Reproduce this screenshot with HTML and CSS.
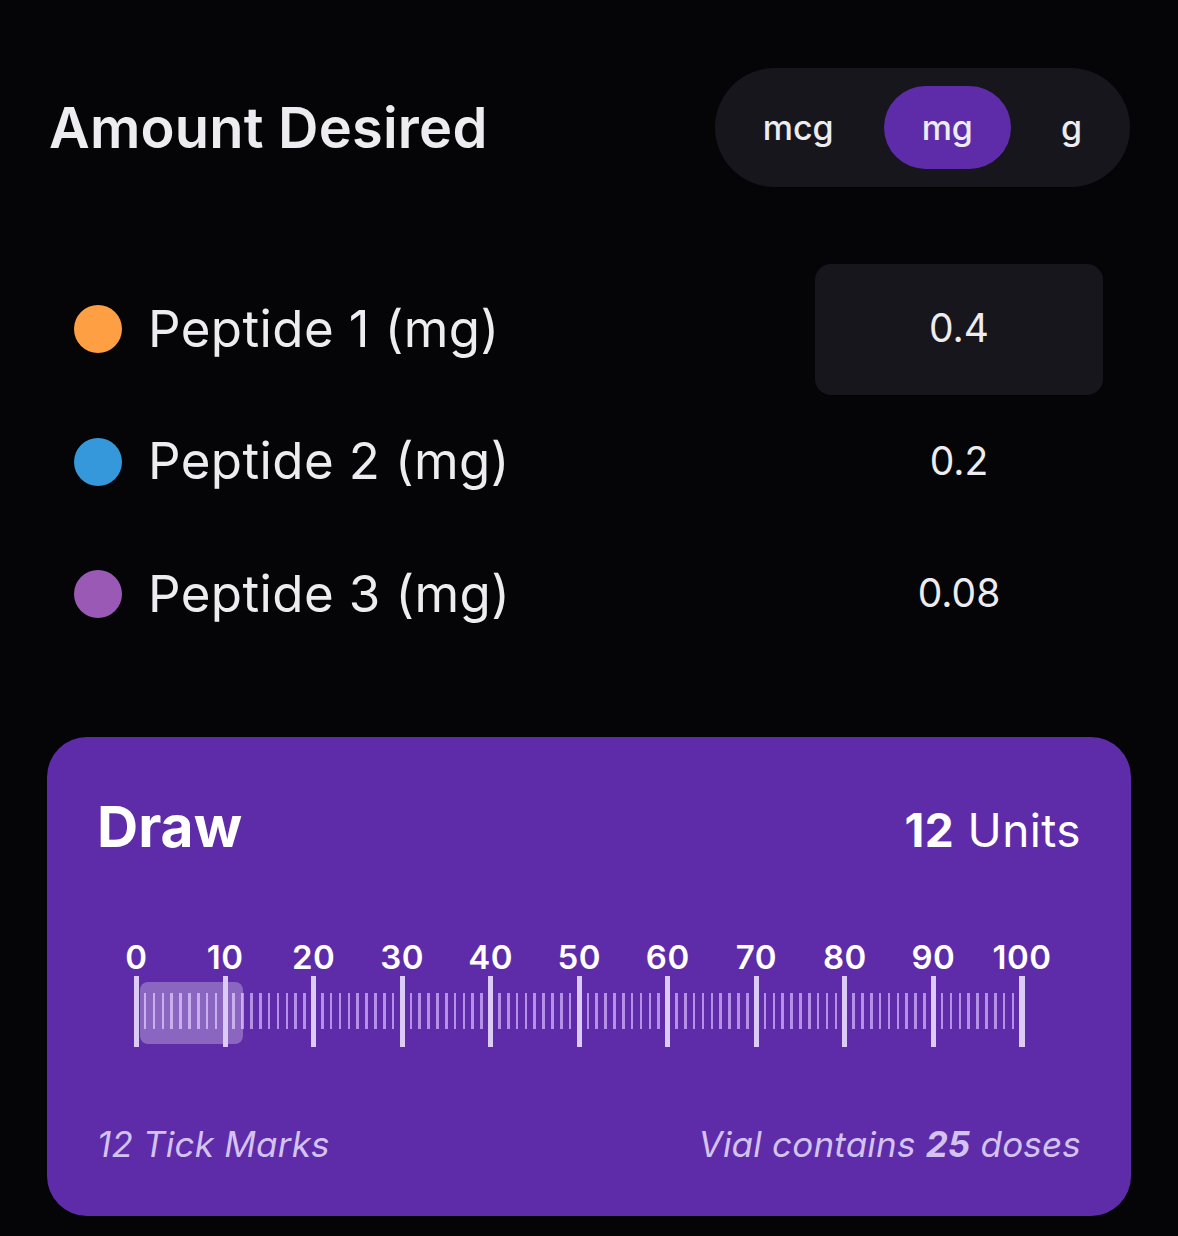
FILE: index.html
```html
<!DOCTYPE html>
<html lang="en">

<head>
    <meta charset="UTF-8">
    <meta name="viewport" content="width=device-width, initial-scale=1.0" />
    <title>Peptide Calculator</title>
    <link rel="stylesheet" href="styles.css">
</head>

<body>
    <main class="screen">
        <!-- Amount header with unit switch -->
        <header class="amount-header">
            <h1>Amount Desired</h1>
            <div class="unit-switch">
                <button class="unit">mcg</button>
                <button class="unit active">mg</button>
                <button class="unit">g</button>
            </div>
        </header>

        <!-- Peptide amounts -->
        <ul class="peptides">
            <li class="peptide-row">
                <span class="dot dot-orange"></span>
                <span class="peptide-name">Peptide 1 (mg)</span>
                <span class="peptide-value selected">0.4</span>
            </li>
            <li class="peptide-row">
                <span class="dot dot-blue"></span>
                <span class="peptide-name">Peptide 2 (mg)</span>
                <span class="peptide-value">0.2</span>
            </li>
            <li class="peptide-row">
                <span class="dot dot-purple"></span>
                <span class="peptide-name">Peptide 3 (mg)</span>
                <span class="peptide-value">0.08</span>
            </li>
        </ul>

        <!-- Draw card with syringe ruler -->
        <section class="draw-card">
            <div class="draw-head">
                <h2>Draw</h2>
                <div class="draw-units"><strong>12</strong> Units</div>
            </div>

            <div class="ruler">
                <div class="ruler-labels">
                    <span>0</span><span>10</span><span>20</span><span>30</span><span>40</span><span>50</span>
                    <span>60</span><span>70</span><span>80</span><span>90</span><span>100</span>
                </div>
                <div class="ruler-track">
                    <div class="ruler-fill" style="width: 103px;"></div>
                </div>
            </div>

            <div class="draw-foot">
                <span>12 Tick Marks</span>
                <span>Vial contains <strong>25</strong> doses</span>
            </div>
        </section>
    </main>
</body>

</html>
```

FILE: styles.css
```css
/* Reset */
* {
    margin: 0;
    padding: 0;
    box-sizing: border-box;
}

body {
    font-family: Inter, 'Noto Sans', sans-serif;
    background-color: #050407;
    color: #ececf1;
}

.screen {
    padding: 68px 48px 0;
}

/* Header */
.amount-header {
    display: flex;
    justify-content: space-between;
    align-items: center;
}

.amount-header h1 {
    font-size: 56px;
    font-weight: 600;
    letter-spacing: 0.2px;
    margin-left: 1px;
}

.unit-switch {
    display: flex;
    gap: 12px;
    padding: 18px 10px 18px 10px;
    background-color: #17161c;
    border-radius: 60px;
}

.unit {
    font-family: inherit;
    font-size: 34px;
    font-weight: 500;
    color: #ececf1;
    background: none;
    border: none;
    height: 83px;
    padding: 0 38px;
    border-radius: 42px;
}

.unit.active {
    background-color: #5e2ca8;
}

/* Peptide list */
.peptides {
    list-style: none;
    margin-top: 76px;
    padding: 0 27px 0 26px;
}

.peptide-row {
    display: flex;
    align-items: center;
    height: 132.5px;
}

.dot {
    width: 48px;
    height: 48px;
    border-radius: 50%;
    margin-right: 26px;
}

.dot-orange {
    background-color: #ff9f43;
}

.dot-blue {
    background-color: #3498db;
}

.dot-purple {
    background-color: #9b59b6;
}

.peptide-name {
    flex: 1;
    font-size: 51px;
    letter-spacing: 0.4px;
    margin-top: -2px;
}

.peptide-value {
    width: 288px;
    height: 131px;
    display: flex;
    align-items: center;
    justify-content: center;
    padding-bottom: 3px;
    font-size: 39px;
    border-radius: 16px;
}

.peptide-value.selected {
    background-color: #17161c;
}

/* Draw card */
.draw-card {
    margin: 76px -1px 0;
    padding: 61px 50px 54px;
    background-color: #5e2ca8;
    border-radius: 40px;
    color: #fff;
}

.draw-head {
    display: flex;
    justify-content: space-between;
    align-items: baseline;
    line-height: 1;
}

.draw-head h2 {
    font-size: 57px;
    font-weight: 700;
}

.draw-units {
    font-size: 46px;
    letter-spacing: 0.4px;
}

.draw-units strong {
    font-weight: 700;
}

/* Ruler */
.ruler {
    margin: 86px 0 0 37px;
}

.ruler-labels {
    display: flex;
    justify-content: space-between;
    width: 885.5px;
    margin-left: 2.5px;
    font-size: 33px;
    font-weight: 600;
    letter-spacing: 0.5px;
    line-height: 1;
}

.ruler-labels span {
    width: 0;
    display: flex;
    justify-content: center;
}

.ruler-track {
    position: relative;
    width: 890.5px;
    height: 71px;
    margin-top: 2px;
}

/* minor ticks */
.ruler-track::before {
    content: "";
    position: absolute;
    left: 1.2px;
    top: 17px;
    width: 885.5px;
    height: 36px;
    background: repeating-linear-gradient(90deg, #b491e6 0 2.6px, transparent 2.6px 8.855px);
}

/* major ticks */
.ruler-track::after {
    content: "";
    position: absolute;
    inset: 0;
    background: repeating-linear-gradient(90deg, #dccbf5 0 5px, transparent 5px 88.55px);
}

.ruler-fill {
    position: absolute;
    left: 6px;
    top: 6px;
    height: 62px;
    border-radius: 8px;
    background-color: rgba(255, 255, 255, 0.28);
}

/* Footer line */
.draw-foot {
    display: flex;
    justify-content: space-between;
    margin-top: 80px;
    font-size: 35px;
    font-style: italic;
    letter-spacing: 0.2px;
    line-height: 1;
    color: #d4c3f1;
}

.draw-foot strong {
    font-weight: 700;
}
```
